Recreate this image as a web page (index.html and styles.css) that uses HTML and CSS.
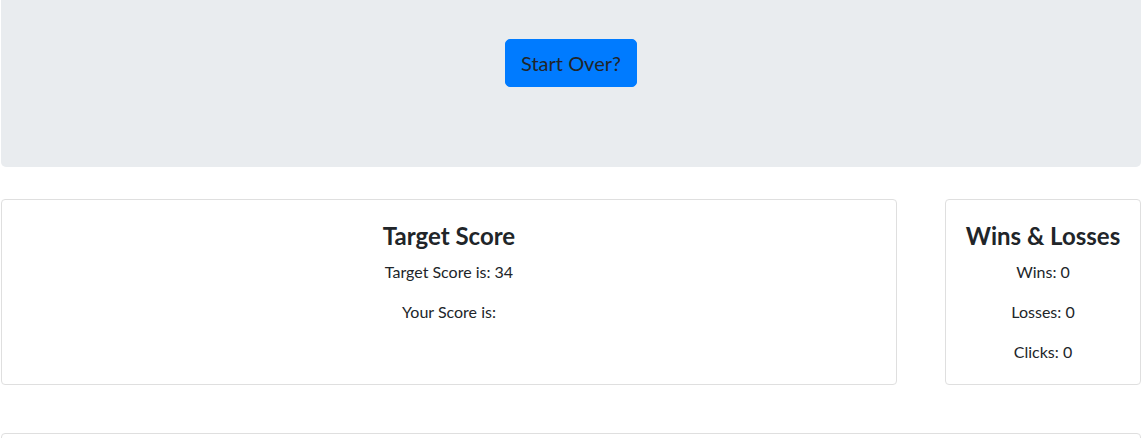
FILE: index.html
```html
<!DOCTYPE html>
<html lang="en">
<head>
<meta charset="utf-8">
<title>Crystal Collector</title>
<link rel="stylesheet" href="styles.css">
</head>
<body>
<div class="page">
  <section class="jumbotron">
    <button class="btn-start" type="button">Start Over?</button>
  </section>
  <div class="row">
    <div class="card card-main">
      <div class="card-body">
        <h4 class="card-title">Target Score</h4>
        <p class="card-text">Target Score is: 34</p>
        <p class="card-text">Your Score is:</p>
      </div>
    </div>
    <div class="card card-side">
      <div class="card-body">
        <h4 class="card-title">Wins &amp; Losses</h4>
        <p class="card-text">Wins: 0</p>
        <p class="card-text">Losses: 0</p>
        <p class="card-text">Clicks: 0</p>
      </div>
    </div>
  </div>
  <div class="card card-crystals">
    <div class="card-body"></div>
  </div>
</div>
</body>
</html>
```

FILE: styles.css
```css
* { box-sizing: border-box; }
html, body { margin: 0; padding: 0; }
body {
  font-family: "Lato", "Noto Sans", sans-serif;
  font-size: 16px;
  line-height: 24px;
  color: #212529;
  background: #fff;
}
.page {
  padding: 0 6px 0 1px;
}
.jumbotron {
  background: #e9ecef;
  border-radius: 0 0 5px 5px;
  height: 167px;
  padding-top: 39px;
  display: flex;
  justify-content: center;
  align-items: flex-start;
}
.btn-start {
  font-family: inherit;
  font-size: 20px;
  line-height: 30px;
  padding: 8px 15px;
  height: 48px;
  color: #212529;
  background: #007bff;
  border: 1px solid #007bff;
  border-radius: 5px;
  cursor: pointer;
}
.row {
  display: flex;
  gap: 48px;
  margin-top: 32px;
}
.card {
  border: 1px solid #dfdfdf;
  border-radius: 4px;
  background: #fff;
}
.card-main { flex: 1; }
.card-side { width: 196px; flex: none; }
.card-body {
  padding: 20px;
  text-align: center;
}
.card-title {
  margin: 0 0 8px;
  font-size: 24px;
  line-height: 32px;
  font-weight: 700;
  white-space: nowrap;
}
.card-side .card-title {
  margin-left: -16px;
  margin-right: -16px;
}
.card-text {
  margin: 0 0 16px;
}
.card-text:last-child { margin-bottom: 0; }
.card-crystals {
  margin-top: 48px;
  height: 120px;
}
```
